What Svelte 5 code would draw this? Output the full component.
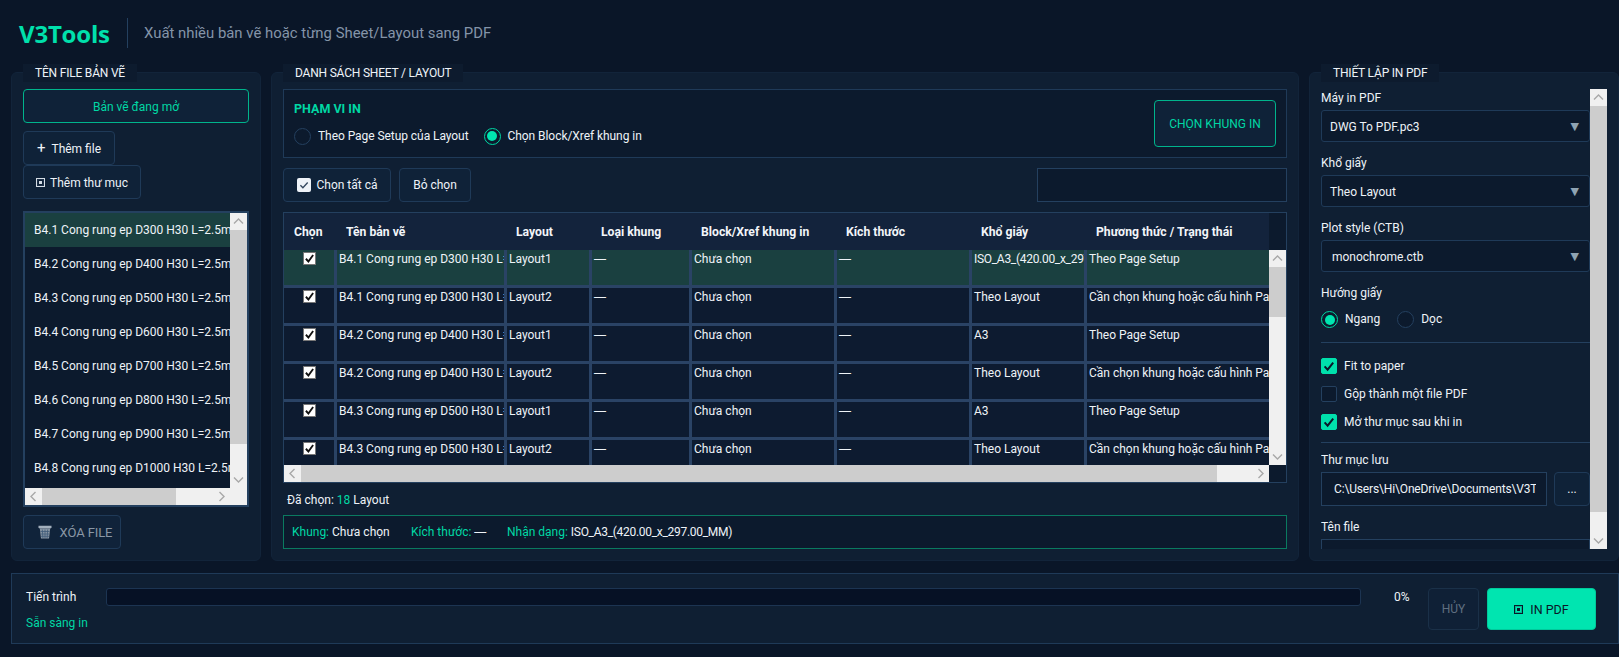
<script>
  const files = ['D300','D400','D500','D600','D700','D800','D900','D1000'].map((d, i) => `B4.${i + 1} Cong rung ep ${d} H30 L=2.5m`);
  const cols = [
    ['Chọn', 53, 10], ['Tên bản vẽ', 170, 9], ['Layout', 85, 9], ['Loại khung', 100, 9],
    ['Block/Xref khung in', 145, 9], ['Kích thước', 135, 9], ['Khổ giấy', 115, 9], ['Phương thức / Trạng thái', 182, 9]
  ];
  const warn = 'Cần chọn khung hoặc cấu hình Page Setup';
  const rows = [
    ['B4.1 Cong rung ep D300 H30 L=2.5m', 'Layout1', 'ISO_A3_(420.00_x_297.00_MM)', 'Theo Page Setup'],
    ['B4.1 Cong rung ep D300 H30 L=2.5m', 'Layout2', 'Theo Layout', warn],
    ['B4.2 Cong rung ep D400 H30 L=2.5m', 'Layout1', 'A3', 'Theo Page Setup'],
    ['B4.2 Cong rung ep D400 H30 L=2.5m', 'Layout2', 'Theo Layout', warn],
    ['B4.3 Cong rung ep D500 H30 L=2.5m', 'Layout1', 'A3', 'Theo Page Setup'],
    ['B4.3 Cong rung ep D500 H30 L=2.5m', 'Layout2', 'Theo Layout', warn]
  ];
  const selects = [['Máy in PDF', 'DWG To PDF.pc3'], ['Khổ giấy', 'Theo Layout'], ['Plot style (CTB)', 'monochrome.ctb']];
  const opts = [['Fit to paper', true], ['Gộp thành một file PDF', false], ['Mở thư mục sau khi in', true]];
</script>

{#snippet chev(d)}
  <svg class="chev" viewBox="0 0 17 17" width="17" height="17"><path d={d} fill="none" stroke="#a8a8a8" stroke-width="1.4"/></svg>
{/snippet}
{#snippet up()}{@render chev('M4 10.5 L8.5 6 L13 10.5')}{/snippet}
{#snippet down()}{@render chev('M4 6.5 L8.5 11 L13 6.5')}{/snippet}
{#snippet left()}{@render chev('M10.5 4 L6 8.5 L10.5 13')}{/snippet}
{#snippet right()}{@render chev('M6.5 4 L11 8.5 L6.5 13')}{/snippet}
{#snippet sq(a, b)}
  <svg viewBox="0 0 9 9" width="9" height="9"><rect x=".5" y=".5" width="8" height="8" fill="none" stroke={a}/><rect x="1.5" y="1.5" width="6" height="6" fill="none" stroke={b}/><rect x="3" y="3" width="3" height="3" fill={a}/></svg>
{/snippet}

<div class="app">
  <header class="top">
    <span class="logo">V3Tools</span>
    <span class="vr"></span>
    <span class="sub">Xuất nhiều bản vẽ hoặc từng Sheet/Layout sang PDF</span>
  </header>

  <main class="main">
    <section class="panel files">
      <h2 class="tab">TÊN FILE BẢN VẼ</h2>
      <button class="btn accent open">Bản vẽ đang mở</button>
      <button class="btn add"><span class="plus">+</span> Thêm file</button>
      <button class="btn folder">{@render sq('#d5dde5', '#1c3048')} Thêm thư mục</button>
      <div class="list">
        <div class="list-top">
          <div class="list-view">
            {#each files as f, i}
              <div class="list-row" class:sel={i === 0}><span>{f}</span></div>
            {/each}
          </div>
          <div class="vbar">
            <div class="sb-btn">{@render up()}</div>
            <div class="thumb lthumb"></div>
            <div class="track"></div>
            <div class="sb-btn">{@render down()}</div>
          </div>
        </div>
        <div class="hbar">
          <div class="sb-btn">{@render left()}</div>
          <div class="thumb lhthumb"></div>
          <div class="track"></div>
          <div class="sb-btn">{@render right()}</div>
          <div class="sb-btn"></div>
        </div>
      </div>
      <button class="btn del">
        <svg viewBox="0 0 14 14" width="14" height="14">
          <path d="M.5 .8h13v1.4l-1 1.2H1.500L.5 2.200z" fill="#a3b0bd"/>
          <path d="M1.800 3.500h10.400l-1.200 10H3z" fill="#8795a3"/>
          <path d="M4.300 4.500l.6 8.500M7 4.500V13M9.700 4.500L9.100 13M2.500 6.500h9M2.800 9h8.400M3 11.300h8" stroke="#3f5a78" stroke-width=".8" fill="none"/>
        </svg>
        <span>XÓA FILE</span>
      </button>
    </section>

    <section class="panel mid">
      <h2 class="tab">DANH SÁCH SHEET / LAYOUT</h2>
      <div class="scope">
        <div class="scope-l">
          <div class="scope-t">PHẠM VI IN</div>
          <div class="radios scope-r">
            <label class="radio"><span class="dot"></span>Theo Page Setup của Layout</label>
            <label class="radio"><span class="dot on"></span>Chọn Block/Xref khung in</label>
          </div>
        </div>
        <button class="btn accent pick">CHỌN KHUNG IN</button>
      </div>
      <div class="tools">
        <button class="btn all">
          <span class="mini"><svg viewBox="0 0 14 14" width="14" height="14"><path d="M3.400 7.200l2.500 2.500 4.800-5.200" fill="none" stroke="#33475e" stroke-width="1.3"/></svg></span>
          Chọn tất cả
        </button>
        <button class="btn none">Bỏ chọn</button>
        <div class="search"></div>
      </div>
      <div class="grid">
        <div class="ghead-wrap">
          <div class="ghead">
            {#each cols as c}
              <div class="hc" style="width:{c[1]}px;padding-left:{c[2]}px">{c[0]}</div>
            {/each}
          </div>
          <div class="gcorner"></div>
        </div>
        <div class="gmid">
          <div class="gview">
            {#each rows as r, i}
              <div class="grow" class:sel={i === 0}>
                <div class="cell ck" style="width:{cols[0][1]}px">
                  <span class="cb"><svg viewBox="0 0 13 13" width="11" height="11"><path d="M2.200 6.800l3 3.200L10.800 2.400" fill="none" stroke="#111" stroke-width="2.200"/></svg></span>
                </div>
                <div class="cell" style="width:{cols[1][1]}px"><span>{r[0]}</span></div>
                <div class="cell" style="width:{cols[2][1]}px"><span>{r[1]}</span></div>
                <div class="cell" style="width:{cols[3][1]}px"><span class="dash">—</span></div>
                <div class="cell" style="width:{cols[4][1]}px"><span>Chưa chọn</span></div>
                <div class="cell" style="width:{cols[5][1]}px"><span class="dash">—</span></div>
                <div class="cell" style="width:{cols[6][1]}px"><span class:iso={i === 0}>{r[2]}</span></div>
                <div class="cell last" style="width:{cols[7][1]}px"><span>{r[3]}</span></div>
              </div>
            {/each}
          </div>
          <div class="vbar">
            <div class="sb-btn">{@render up()}</div>
            <div class="thumb gthumb"></div>
            <div class="track"></div>
            <div class="sb-btn">{@render down()}</div>
          </div>
        </div>
        <div class="hbar">
          <div class="sb-btn">{@render left()}</div>
          <div class="thumb ghthumb"></div>
          <div class="track"></div>
          <div class="sb-btn">{@render right()}</div>
          <div class="gcorner2"></div>
        </div>
      </div>
      <div class="count">Đã chọn: <b>18</b> Layout</div>
      <div class="info">
        <span class="i1"><em>Khung:</em> Chưa chọn</span>
        <span class="i2"><em>Kích thước:</em> <span class="dash">—</span></span>
        <span><em>Nhận dạng:</em> <span class="iso">ISO_A3_(420.00_x_297.00_MM)</span></span>
      </div>
    </section>

    <section class="panel cfg">
      <h2 class="tab">THIẾT LẬP IN PDF</h2>
      <div class="cfg-scroll">
        <div class="cfg-body">
          {#each selects as s, i}
            <div class="lab">{s[0]}</div>
            <div class="combo" class:mono={i === 2}><span>{s[1]}</span><i>▼</i></div>
          {/each}
          <div class="lab">Hướng giấy</div>
          <div class="radios ori">
            <label class="radio"><span class="dot on"></span>Ngang</label>
            <label class="radio"><span class="dot"></span>Dọc</label>
          </div>
          <div class="hr first"></div>
          {#each opts as o}
            <label class="opt">
              <span class="box" class:on={o[1]}>
                {#if o[1]}<svg viewBox="0 0 16 16" width="16" height="16"><path d="M3.600 8.400l3 3.200 5.600-7" fill="none" stroke="#0a1628" stroke-width="2"/></svg>{/if}
              </span>
              {o[0]}
            </label>
          {/each}
          <div class="hr second"></div>
          <div class="lab l2">Thư mục lưu</div>
          <div class="pathrow">
            <div class="path"><span>C:\Users\Hi\OneDrive\Documents\V3Tools\PDF</span></div>
            <button class="btn dots">...</button>
          </div>
          <div class="lab">Tên file</div>
          <div class="fname"></div>
        </div>
        <div class="vbar">
          <div class="sb-btn">{@render up()}</div>
          <div class="thumb cthumb"></div>
          <div class="track"></div>
          <div class="sb-btn">{@render down()}</div>
        </div>
      </div>
    </section>
  </main>

  <footer class="foot">
    <div class="foot-l">
      <div class="prog">
        <span class="plabel">Tiến trình</span>
        <div class="bar"></div>
        <span class="pct">0%</span>
      </div>
      <div class="status">Sẵn sàng in</div>
    </div>
    <button class="btn cancel">HỦY</button>
    <button class="btn print">{@render sq('#0a1628', '#00b58d')} IN PDF</button>
  </footer>
</div>

<style>
  :global(body) {
    margin: 0;
    background: #0a1628;
    overflow: hidden;
  }
  .app {
    width: 1619px;
    height: 657px;
    overflow: hidden;
    background: #0a1628;
    color: #eef3f8;
    font-family: Roboto, "Noto Sans", sans-serif;
    font-size: 12px;
    box-sizing: border-box;
    padding-left: 11px;
  }
  * { box-sizing: border-box; }
  .top {
    height: 66px;
    display: flex;
    align-items: center;
    padding-left: 8px;
  }
  .logo {
    font-family: "Open Sans", Roboto, sans-serif;
    font-size: 24px;
    font-weight: 700;
    letter-spacing: -0.2px;
    color: #00e0ac;
    width: 108px;
  }
  .vr { width: 1px; height: 30px; background: #24405f; }
  .sub { margin-left: 16px; font-size: 14.9px; color: #8494a8; }

  .main {
    margin-top: 6px;
    height: 489px;
    display: flex;
    gap: 10px;
  }
  .panel {
    position: relative;
    background: #0f1f33;
    border: 1px solid #12243a;
    border-radius: 6px;
    padding: 16px 11px 11px;
    display: flex;
    flex-direction: column;
  }
  .tab {
    position: absolute;
    top: -9px;
    left: 11px;
    height: 18px;
    margin: 0;
    padding: 0 12px;
    background: #0d1b2e;
    font-size: 12px;
    line-height: 18px;
    font-weight: 400;
    letter-spacing: -0.2px;
    color: #eef3f8;
    white-space: nowrap;
  }
  .files { width: 250px; }
  .mid { width: 1028px; }
  .cfg { width: 310px; }

  .btn {
    display: inline-flex;
    align-items: center;
    justify-content: center;
    gap: 5px;
    height: 34px;
    padding: 0;
    background: #0f2238;
    border: 1px solid #1f3a58;
    border-radius: 4px;
    color: #eef3f8;
    font: inherit;
  }
  .accent { border-color: #00b48c; color: #00d8a4; }
  .open { width: 226px; flex: none; padding-top: 2px; }
  .add { width: 92px; margin-top: 8px; flex: none; padding-top: 1px; }
  .plus { font-size: 15px; line-height: 1; margin-right: 1px; }
  .folder { width: 118px; flex: none; padding-top: 1px; }
  .folder svg, .print svg { display: block; flex: none; }
  .del {
    width: 98px;
    margin-top: 8px;
    flex: none;
    color: #8a97a5;
    gap: 8px;
    background: #10233a;
    font-size: 13px;
    padding-left: 6px;
  }
  .del svg { display: block; flex: none; }
  .del span { padding-top: 1px; letter-spacing: -0.1px; }

  .list {
    margin-top: 12px;
    height: 296px;
    width: 226px;
    border: 2px solid #24405f;
    display: flex;
    flex-direction: column;
    background: #0c1a2d;
    flex: none;
  }
  .list-top { flex: 1; display: flex; min-height: 0; }
  .list-view { flex: 1; min-width: 0; overflow: hidden; }
  .list-row {
    height: 34px;
    padding: 0 0 0 9px;
    display: flex;
    align-items: center;
    white-space: nowrap;
    overflow: hidden;
  }
  .list-row.sel { background: #1a4040; }

  .vbar { width: 17px; flex: none; display: flex; flex-direction: column; background: #f0f0f0; }
  .hbar { height: 17px; flex: none; display: flex; background: #f0f0f0; }
  .sb-btn { width: 17px; height: 17px; flex: none; background: #f0f0f0; }
  .chev { display: block; }
  .thumb { background: #cdcdcd; flex: none; }
  .track { flex: 1; background: #f0f0f0; min-width: 0; min-height: 0; }
  .lthumb { height: 214px; }
  .lhthumb { width: 134px; }
  .gthumb { height: 50px; }
  .ghthumb { width: 916px; }
  .cthumb { height: 406px; }

  .scope {
    height: 69px;
    flex: none;
    border: 1px solid #1f3a58;
    background: #0c1a2d;
    display: flex;
    align-items: center;
    justify-content: space-between;
    padding: 0 10px 0 10px;
  }
  .scope-l { padding-bottom: 2px; }
  .scope-t { color: #00d8a4; font-weight: 700; font-size: 12.5px; line-height: 16px; margin-bottom: 11px; }
  .radios { display: flex; align-items: center; gap: 14px; }
  .scope-r { letter-spacing: -0.06px; gap: 15px; }
  .radio { display: flex; align-items: center; gap: 7px; line-height: 17px; }
  .dot {
    width: 17px;
    height: 17px;
    border-radius: 50%;
    border: 1px solid #24405f;
    background: #0c1a2d;
    flex: none;
    position: relative;
  }
  .dot.on { border: 1.5px solid #00d8a4; }
  .dot.on::after {
    content: "";
    position: absolute;
    inset: 2.5px;
    border-radius: 50%;
    background: #00e5b0;
  }
  .pick { width: 122px; height: 47px; flex: none; }

  .tools { margin-top: 10px; display: flex; gap: 8px; height: 34px; flex: none; }
  .all { width: 108px; padding-left: 1px; }
  .mini {
    width: 14px;
    height: 14px;
    background: #eef3f8;
    border-radius: 2px;
    display: block;
    flex: none;
  }
  .mini svg { display: block; }
  .none { width: 72px; }
  .search {
    margin-left: auto;
    width: 250px;
    border: 1px solid #24405f;
    background: #0c1a2d;
  }

  .grid {
    margin-top: 10px;
    height: 271px;
    flex: none;
    border: 1px solid #24405f;
    background: #0c1a2d;
    display: flex;
    flex-direction: column;
  }
  .ghead-wrap { display: flex; height: 37px; flex: none; }
  .ghead { flex: 1; min-width: 0; display: flex; background: #13233c; overflow: hidden; }
  .gcorner { width: 17px; flex: none; }
  .hc {
    flex: none;
    line-height: 37px;
    padding-top: 1px;
    font-weight: 700;
    font-size: 12.2px;
    white-space: nowrap;
    overflow: hidden;
    color: #f2f5f9;
  }
  .gmid { flex: 1; min-height: 0; display: flex; }
  .gview { flex: 1; min-width: 0; overflow: hidden; }
  .grow { display: flex; height: 38px; background: #0d1b30; }
  .grow.sel { background: #1a4040; }
  .cell {
    flex: none;
    height: 38px;
    border-right: 3px solid #2a4365;
    border-bottom: 3px solid #2a4365;
    padding: 1px 0 0 2px;
    line-height: 16px;
    white-space: nowrap;
    overflow: hidden;
  }
  .cell.last { border-right: 0; }
  .ck { padding: 2px 0 0 19px; }
  .cb {
    display: flex;
    align-items: center;
    justify-content: center;
    width: 13px;
    height: 13px;
    background: #fff;
    border: 1px solid #777;
  }
  .dash { font-family: "Liberation Sans", sans-serif; }
  .iso { letter-spacing: -0.3px; }
  .gcorner2 { width: 17px; flex: none; background: #0c1a2d; }

  .count {
    height: 32px;
    flex: none;
    line-height: 34px;
    padding-left: 4px;
  }
  .count b { font-weight: 400; color: #00d8a4; }
  .info {
    height: 34px;
    flex: none;
    border: 1px solid #0a7a60;
    background: #0c1a2d;
    display: flex;
    align-items: center;
    padding-left: 8px;
  }
  .info em { font-style: normal; color: #00d8a4; }
  .i1 { width: 119px; }
  .i2 { width: 96px; }

  .cfg-scroll { display: flex; height: 460px; overflow: hidden; }
  .cfg-body { width: 269px; flex: none; overflow: hidden; }
  .cfg .vbar { height: 460px; }
  .lab { height: 18px; line-height: 18px; margin: 12px 0 3px; }
  .lab:first-child { margin-top: 0; }
  .combo {
    height: 32px;
    border: 1px solid #1f3a58;
    border-radius: 3px;
    background: #0c1a2d;
    display: flex;
    align-items: center;
    justify-content: space-between;
    padding: 1px 10px 0 8px;
  }
  .combo i { font-style: normal; font-size: 11px; color: #8fa3b3; font-family: "DejaVu Sans", sans-serif; }
  .combo.mono span { margin-left: 2px; }
  .ori { margin-top: 9px; height: 17px; gap: 17px; }
  .hr { height: 1px; background: #24405f; }
  .hr.first { margin: 14px 0 15px; }
  .opt { display: flex; align-items: center; gap: 7px; height: 16px; margin-bottom: 12px; }
  .box {
    width: 16px;
    height: 16px;
    border: 1px solid #24405f;
    border-radius: 2px;
    background: #0c1a2d;
    flex: none;
  }
  .box.on { background: #00e0ac; border-color: #00e0ac; }
  .box svg { display: block; margin: -1px; }
  .hr.second { margin: 3px 0 0; }
  .lab.l2 { margin-top: 8px; }
  .pathrow { display: flex; gap: 7px; height: 34px; }
  .path {
    width: 226px;
    border: 1px solid #24405f;
    background: #0c1a2d;
    display: flex;
    align-items: center;
    padding-left: 12px;
    padding-right: 10px;
    white-space: nowrap;
    overflow: hidden;
    letter-spacing: -0.15px;
  }
  .path span { overflow: hidden; }
  .dots { width: 36px; }
  .fname { height: 34px; border: 1px solid #24405f; background: #0c1a2d; }

  .foot {
    margin-top: 12px;
    height: 71px;
    width: 1608px;
    border: 1px solid #1f3a58;
    background: #0f1f33;
    display: flex;
    padding: 14px 22px 0 14px;
    gap: 8px;
    align-items: flex-start;
  }
  .foot-l { flex: 1; min-width: 0; }
  .prog { display: flex; align-items: center; height: 18px; }
  .plabel { width: 80px; flex: none; }
  .bar {
    flex: 1;
    height: 18px;
    border: 1px solid #1c3452;
    border-radius: 3px;
    background: #061125;
  }
  .pct { width: 59px; padding-left: 33px; flex: none; }
  .status { color: #00d8a4; margin-top: 8px; line-height: 18px; }
  .cancel {
    width: 51px;
    height: 42px;
    color: #5f6f80;
    background: #0f2036;
    border-color: #1a3048;
  }
  .print {
    width: 109px;
    height: 42px;
    background: #00e5b0;
    border-color: #00c99b;
    color: #0a1628;
    gap: 7px;
    font-size: 12.5px;
  }
</style>
